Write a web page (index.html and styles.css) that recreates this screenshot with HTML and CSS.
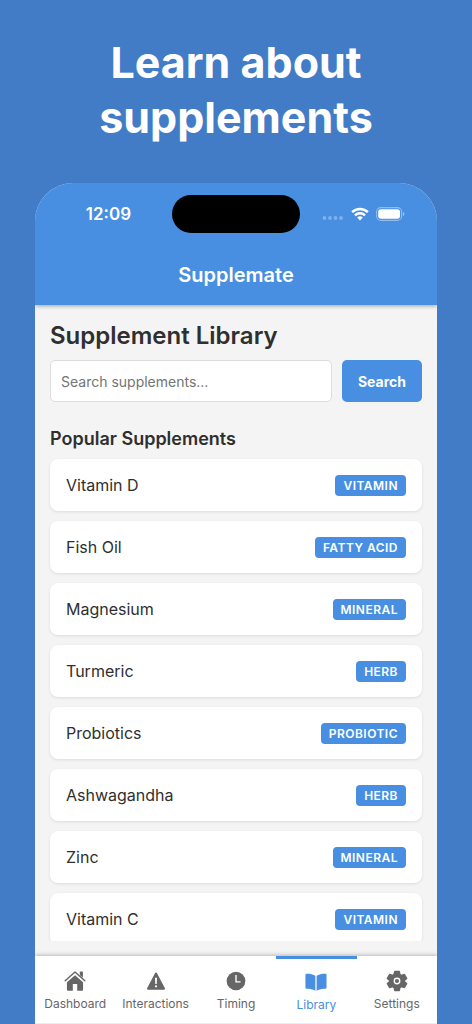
FILE: index.html
```html
<!DOCTYPE html>
<html lang="en">
<head>
<meta charset="utf-8">
<meta name="viewport" content="width=device-width, initial-scale=1">
<title>Supplemate</title>
<link rel="stylesheet" href="styles.css">
</head>
<body>
<div class="stage">
  <h1 class="headline">Learn about<br>supplements</h1>
  <div class="phone">
    <header class="top">
      <div class="status">
        <span class="time">12:09</span>
        <span class="island"></span>
        <span class="indicators">
          <svg class="signal" width="22" height="4" viewBox="0 0 22 4" aria-hidden="true"><g fill="#fff" opacity=".3"><circle cx="2.5" cy="2" r="1.9"/><circle cx="8" cy="2" r="1.9"/><circle cx="13.500" cy="2" r="1.9"/><circle cx="19" cy="2" r="1.9"/></g></svg>
          <svg class="wifi" width="18" height="14" viewBox="0 0 18 14" aria-hidden="true"><g fill="none" stroke="#fff" stroke-width="2.400"><path d="M1.100 5.200A11.200 11.200 0 0 1 16.900 5.200"/><path d="M4 8.300A7.100 7.100 0 0 1 14 8.300"/></g><path fill="#fff" d="M9 13.400 6.200 10.600A4 4 0 0 1 11.800 10.600Z"/></svg>
          <svg class="battery" width="29" height="14" viewBox="0 0 29 14" aria-hidden="true"><rect x=".6" y=".6" width="25" height="12.800" rx="4.200" fill="none" stroke="#fff" stroke-opacity=".4" stroke-width="1.100"/><rect x="2.200" y="2.200" width="21.800" height="9.600" rx="2.700" fill="#fff"/><path d="M26.900 5v4.200c1-.4 1.500-1.200 1.500-2.100s-.5-1.700-1.500-2.100z" fill="#fff" opacity=".45"/></svg>
        </span>
      </div>
      <div class="app-title">Supplemate</div>
    </header>
    <main class="content">
      <h2 class="page-title">Supplement Library</h2>
      <form class="search">
        <input class="search-input" type="text" placeholder="Search supplements..." aria-label="Search supplements">
        <button class="search-button" type="button">Search</button>
      </form>
      <h3 class="section-title">Popular Supplements</h3>
      <ul class="list">
        <li class="card"><span>Vitamin D</span><span class="tag">VITAMIN</span></li>
        <li class="card"><span>Fish Oil</span><span class="tag">FATTY ACID</span></li>
        <li class="card"><span>Magnesium</span><span class="tag">MINERAL</span></li>
        <li class="card"><span>Turmeric</span><span class="tag">HERB</span></li>
        <li class="card"><span>Probiotics</span><span class="tag">PROBIOTIC</span></li>
        <li class="card"><span>Ashwagandha</span><span class="tag">HERB</span></li>
        <li class="card"><span>Zinc</span><span class="tag">MINERAL</span></li>
        <li class="card"><span>Vitamin C</span><span class="tag">VITAMIN</span></li>
      </ul>
    </main>
    <nav class="tabs">
      <a class="tab" href="#dashboard">
        <svg class="tab-icon" viewBox="0 0 24 24" aria-hidden="true"><path d="M12 5.700 3.200 13.300V21.500c0 .7.500 1.200 1.200 1.200H9.600V15.400h4.800v7.300h5.200c.7 0 1.200-.5 1.200-1.200V13.300z"/><path d="M17.200 2h3.200v6.600l-3.200-2.800z"/><path d="M1.300 12.200 12 2.700l10.700 9.500" fill="none" stroke="#fff" stroke-width="3"/><path d="M1.300 11.700 12 2.200l10.700 9.500" fill="none" stroke="currentColor" stroke-width="1.600" stroke-linecap="round" stroke-linejoin="round"/><path d="M17.600 2h2.800v5.800l-2.800-2.500z"/></svg>
        Dashboard
      </a>
      <a class="tab" href="#interactions">
        <svg class="tab-icon" viewBox="0 0 24 24" aria-hidden="true"><path fill-rule="evenodd" d="M11 3.300c.4-.8 1.600-.8 2 0l8.700 16.700c.4.700-.1 1.600-1 1.600H3.300c-.9 0-1.400-.9-1-1.600zM10.900 8.500l.3 6.800h1.600l.3-6.800zM12 16.600a1.200 1.200 0 1 0 0 2.400 1.200 1.200 0 0 0 0-2.400z"/></svg>
        Interactions
      </a>
      <a class="tab" href="#timing">
        <svg class="tab-icon" viewBox="0 0 24 24" aria-hidden="true"><circle cx="12" cy="12" r="10.200"/><path d="M12 5.500V13H17" fill="none" stroke="#fff" stroke-width="1.500"/></svg>
        Timing
      </a>
      <a class="tab active" href="#library" aria-current="page">
        <svg class="tab-icon" viewBox="0 0 24 24" aria-hidden="true"><path d="M11.300 5.300C9 3.500 5.200 2.900 1.500 3c-.6 0-1 .4-1 1v14.400c0 .6.400 1 1 1 3.700 0 7 .4 9.800 2.200zM12.700 5.300C15 3.500 18.800 2.900 22.500 3c.6 0 1 .4 1 1v14.400c0 .6-.4 1-1 1-3.700 0-7 .4-9.800 2.200z"/></svg>
        Library
      </a>
      <a class="tab" href="#settings">
        <svg class="tab-icon" viewBox="0 0 24 24" aria-hidden="true"><path stroke="currentColor" stroke-width="1.800" stroke-linejoin="round" d="M9.600 1.800h4.800l.6 3.100 2 1.200 3-1.100 2.400 4.200-2.400 2v1.600l2.400 2L20 19l-3-1.100-2 1.200-.6 3.100H9.600L9 19.100l-2-1.200L4 19l-2.400-4.200 2.400-2v-1.600l-2.400-2L4 5l3 1.100 2-1.200z"/><circle cx="12" cy="12" r="3" fill="none" stroke="#fff" stroke-width="1.500"/></svg>
        Settings
      </a>
    </nav>
  </div>
</div>
</body>
</html>
```
FILE: styles.css
```css
* { box-sizing: border-box; }
body {
  margin: 0;
  background: #427cc7;
  color: #2f2f2f;
  font-family: Inter, "Liberation Sans", sans-serif;
}
h1, h2, h3, ul { margin: 0; padding: 0; }
.stage {
  display: flex;
  flex-direction: column;
  height: 100vh;
  padding: 35px 35px 0;
}
.headline {
  color: #fff;
  font-size: 43px;
  line-height: 55px;
  font-weight: 700;
  text-align: center;
}
.phone {
  display: flex;
  flex: 1;
  flex-direction: column;
  min-height: 0;
  margin-top: 38px;
  overflow: hidden;
  background: #f4f4f4;
  border-radius: 38px 38px 0 0;
}
.top {
  z-index: 1;
  background: #488fe1;
  box-shadow: 0 1px 4px rgba(0, 0, 0, .35);
  color: #fff;
}
.status {
  display: grid;
  grid-template-columns: 1fr 128px 1fr;
  align-items: center;
  padding-top: 12px;
}
.time {
  padding-left: 10px;
  font-size: 17px;
  line-height: 20px;
  font-weight: 600;
  text-align: center;
}
.island {
  height: 38px;
  background: #000;
  border-radius: 19px;
}
.indicators {
  display: flex;
  align-items: center;
  justify-content: center;
  gap: 7px;
  padding-right: 10px;
}
.signal { margin-top: 8px; }
.app-title {
  padding: 30px 0 18px;
  font-size: 20px;
  line-height: 24px;
  font-weight: 600;
  text-align: center;
}
.content {
  display: flex;
  flex: 1;
  flex-direction: column;
  min-height: 0;
  margin-bottom: 15px;
  padding: 16px 15px 0;
  overflow: hidden;
}
.page-title {
  font-size: 24px;
  line-height: 30px;
  font-weight: 600;
}
.search {
  display: flex;
  gap: 10px;
  margin-top: 9px;
}
.search-input {
  flex: 1;
  min-width: 0;
  height: 42px;
  padding: 0 10px;
  border: 1px solid #ddd;
  border-radius: 5px;
  background: #fff;
  color: #2f2f2f;
  font: 14px Inter, "Liberation Sans", sans-serif;
}
.search-input::placeholder { color: #757575; opacity: 1; }
.search-button {
  width: 80px;
  height: 42px;
  padding: 0;
  border: 0;
  border-radius: 5px;
  background: #488fe1;
  color: #fff;
  font: 700 14px Inter, "Liberation Sans", sans-serif;
}
.section-title {
  margin-top: 24px;
  font-size: 18px;
  line-height: 25px;
  font-weight: 600;
}
.list {
  display: flex;
  flex-direction: column;
  gap: 10px;
  margin-top: 8px;
  list-style: none;
}
.card {
  display: flex;
  align-items: center;
  justify-content: space-between;
  padding: 15px 16px;
  background: #fff;
  border-radius: 8px;
  box-shadow: 0 1px 3px rgba(0, 0, 0, .1);
  font-size: 16px;
  line-height: 22px;
}
.tag {
  padding: 0 8px;
  border-radius: 4px;
  background: #488fe1;
  color: #fff;
  font-size: 12px;
  line-height: 21px;
  font-weight: 600;
  letter-spacing: .04em;
}
.tabs {
  z-index: 1;
  display: flex;
  background: #fff;
  border-bottom: 1px solid #eee;
  box-shadow: 0 -1px 4px rgba(0, 0, 0, .25);
}
.tab {
  display: flex;
  flex: 1;
  flex-direction: column;
  align-items: center;
  gap: 4px;
  min-width: 0;
  padding: 14px 0 11px;
  color: #666;
  font-size: 12px;
  line-height: 16px;
  text-decoration: none;
}
.active {
  padding: 12px 0 10px;
  border-top: 3px solid #488fe1;
  color: #488fe1;
}
.tab-icon {
  width: 22px;
  height: 22px;
  fill: currentColor;
}
```
